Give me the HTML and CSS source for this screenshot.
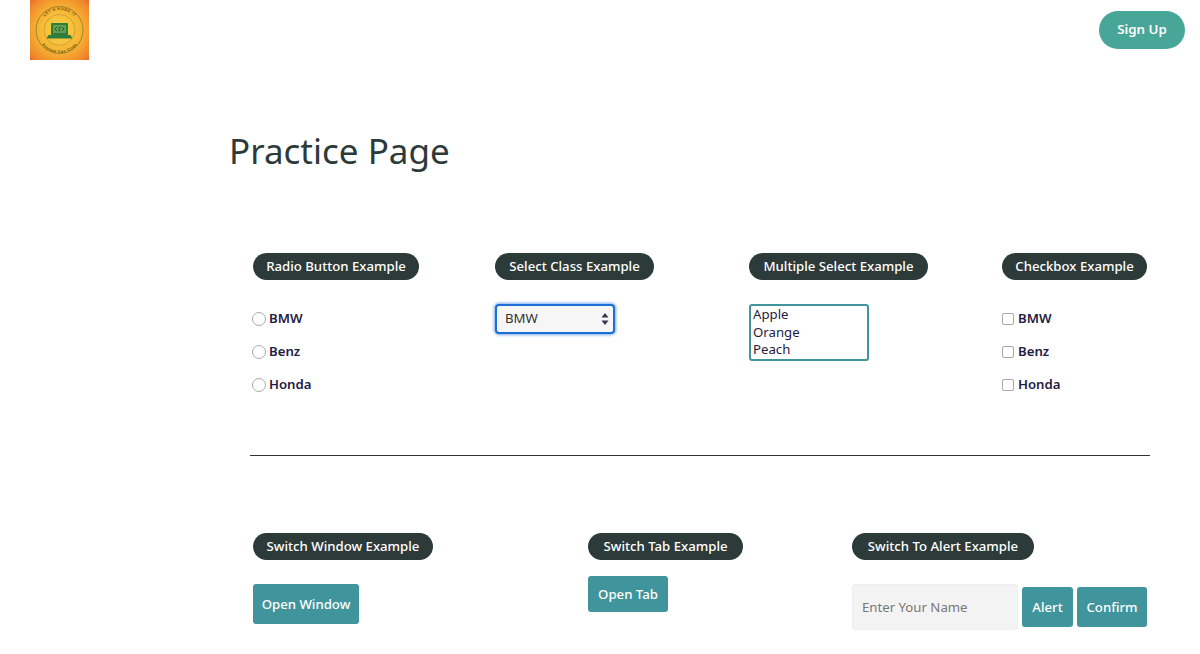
FILE: index.html
```html
<!DOCTYPE html>
<html lang="en">
<head>
<meta charset="utf-8">
<title>Practice Page</title>
<link rel="stylesheet" href="styles.css">
</head>
<body>
<header class="topbar">
  <svg class="logo" viewBox="0 0 59 60" role="img" aria-label="Let's Kode It logo">
    <defs>
      <radialGradient id="sun" cx="50%" cy="50%" r="75%">
        <stop offset="0" stop-color="#f7d648"/>
        <stop offset="0.5" stop-color="#f6b332"/>
        <stop offset="0.8" stop-color="#f08a2c"/>
        <stop offset="1" stop-color="#ea5a2a"/>
      </radialGradient>
      <path id="arcTop" d="M9.500 30a20 20 0 0 1 40 0"/>
      <path id="arcBottom" d="M6.500 30a23 23 0 0 0 46 0"/>
    </defs>
    <rect width="59" height="60" fill="url(#sun)"/>
    <circle cx="29.500" cy="30" r="23.500" fill="none" stroke="#a5812e" stroke-width="1"/>
    <circle cx="29.500" cy="30" r="15.500" fill="none" stroke="#c29a35" stroke-width="0.800"/>
    <text class="logo-text"><textPath href="#arcTop" startOffset="50%" text-anchor="middle">LET'S KODE IT</textPath></text>
    <text class="logo-text"><textPath href="#arcBottom" startOffset="50%" text-anchor="middle">Anyone Can Code</textPath></text>
    <rect x="21" y="23" width="17" height="12" rx="1" fill="#2f7d3a"/>
    <rect x="23" y="25" width="13" height="8" fill="#5f9e52"/>
    <path d="M18.500 35h22l2 3.500h-26z" fill="#2f7d3a"/>
    <path d="M27 27l-2 2 2 2M32 27l2 2-2 2M30 26.500l-1 5" fill="none" stroke="#123f1c" stroke-width="0.700"/>
  </svg>
  <a class="signup" href="#">Sign Up</a>
</header>

<main class="page">
  <h1 class="title">Practice Page</h1>

  <section class="row row-top">
    <div class="group">
      <h2 class="pill pill-radio">Radio Button Example</h2>
      <label class="choice choice-radio"><input type="radio" name="car"><span>BMW</span></label>
      <label class="choice choice-radio"><input type="radio" name="car"><span>Benz</span></label>
      <label class="choice choice-radio"><input type="radio" name="car"><span>Honda</span></label>
    </div>
    <div class="group">
      <h2 class="pill pill-select">Select Class Example</h2>
      <div class="fake-select">
        <span>BMW</span>
        <svg class="updown" viewBox="0 0 8 12"><path d="M4 0l3.500 4.500h-7zM4 12L.5 7.500h7z"/></svg>
      </div>
    </div>
    <div class="group">
      <h2 class="pill pill-multi">Multiple Select Example</h2>
      <div class="listbox">
        <div>Apple</div>
        <div>Orange</div>
        <div>Peach</div>
      </div>
    </div>
    <div class="group">
      <h2 class="pill pill-check">Checkbox Example</h2>
      <label class="choice choice-check"><input type="checkbox"><span>BMW</span></label>
      <label class="choice choice-check"><input type="checkbox"><span>Benz</span></label>
      <label class="choice choice-check"><input type="checkbox"><span>Honda</span></label>
    </div>
  </section>

  <hr class="rule">

  <section class="row row-bottom">
    <div class="group">
      <h2 class="pill pill-window">Switch Window Example</h2>
      <button class="btn btn-window" type="button">Open Window</button>
    </div>
    <div class="group">
      <h2 class="pill pill-tab">Switch Tab Example</h2>
      <button class="btn btn-tab" type="button">Open Tab</button>
    </div>
    <div class="group">
      <h2 class="pill pill-alert">Switch To Alert Example</h2>
      <div class="alert-row">
        <input class="name" type="text" placeholder="Enter Your Name">
        <button class="btn btn-alert" type="button">Alert</button>
        <button class="btn btn-confirm" type="button">Confirm</button>
      </div>
    </div>
  </section>
</main>
</body>
</html>
```

FILE: styles.css
```css
* { box-sizing: border-box; }

html, body { margin: 0; background: #fff; }

body {
  height: 654px;
  overflow: hidden;
  font-family: "Noto Sans", "Open Sans", sans-serif;
  color: #1f2041;
}

.topbar {
  display: flex;
  justify-content: space-between;
  align-items: flex-start;
  padding: 0 15px 0 30px;
  height: 60px;
}

.logo { display: block; width: 59px; height: 60px; }

.logo-text {
  font-family: "Liberation Sans", sans-serif;
  font-size: 4px;
  font-weight: 700;
  letter-spacing: 0.4px;
  fill: #6b4c14;
}

.signup {
  margin-top: 11px;
  width: 86px;
  height: 38px;
  border-radius: 19px;
  background: #47a697;
  color: #fff;
  font-size: 13.300px;
  font-weight: 600;
  line-height: 37px;
  text-align: center;
  text-decoration: none;
}

.page { margin-left: 230px; width: 920px; }

.title {
  margin: 66px 0 0 -1px;
  font-size: 35px;
  font-weight: 400;
  line-height: 50px;
  color: #2c3a3a;
}

.row { display: grid; margin-left: 23px; }

.row-top {
  grid-template-columns: 242px 254px 253px auto;
  margin-top: 77px;
  height: 202px;
}

.row-bottom {
  grid-template-columns: 335px 264px auto;
  margin-top: 77px;
}

.group {
  display: flex;
  flex-direction: column;
  align-items: flex-start;
}

.pill {
  margin: 0;
  height: 27px;
  border-radius: 14px;
  background: #2c3a3a;
  color: #fff;
  font-size: 13.200px;
  font-weight: 500;
  line-height: 27px;
  text-align: center;
  white-space: nowrap;
}

.pill-radio { width: 166px; }
.pill-select { width: 159px; }
.pill-multi { width: 179px; }
.pill-check { width: 145px; }
.pill-window { width: 180px; }
.pill-tab { width: 155px; }
.pill-alert { width: 182px; }

.pill + .choice { margin-top: 22px; }

.choice {
  display: flex;
  align-items: center;
  height: 33px;
  font-size: 13.200px;
  font-weight: 600;
}

.choice span { padding-bottom: 2px; }

.choice input { appearance: none; background: #fff; border: 1px solid #a9a9a9; }

.choice-radio input {
  margin: 0 3px 0 -1px;
  width: 14px;
  height: 14px;
  border-radius: 50%;
}

.choice-check input {
  margin: 0 4px 0 0;
  width: 12px;
  height: 12px;
  border-radius: 2px;
}

.fake-select {
  display: flex;
  justify-content: space-between;
  align-items: center;
  margin-top: 24px;
  width: 120px;
  height: 30px;
  padding: 0 4px 0 8px;
  border: 2px solid #1c6fd6;
  border-radius: 4px;
  box-shadow: 0 0 3px 1px #7aa9ea;
  background: #f6f6f6;
  font-size: 13.200px;
  color: #333;
}

.fake-select span { padding-bottom: 2px; }

.updown { width: 8px; height: 12px; fill: #333a4a; }

.listbox {
  margin-top: 24px;
  width: 120px;
  height: 57px;
  padding: 0 2px;
  border: 2px solid #3f959b;
  border-radius: 3px;
  font-size: 13.200px;
  line-height: 17.500px;
  background: #fff;
}

.btn {
  padding: 0;
  border: 0;
  border-radius: 3px;
  background: #3f959b;
  color: #fff;
  font-family: inherit;
  font-size: 13.200px;
  font-weight: 500;
}

.btn-window { width: 106px; height: 40px; margin-top: 24px; }

.btn-tab { width: 80px; height: 36px; margin-top: 16px; }

.alert-row {
  display: flex;
  align-items: center;
  gap: 4px;
  margin-top: 24px;
}

.btn-alert { width: 51px; height: 40px; }

.btn-confirm { width: 70px; height: 40px; }

.name {
  width: 166px;
  height: 46px;
  padding: 0 9px;
  border: 1px solid #eee;
  border-radius: 3px;
  background: #f3f3f3;
  font-family: inherit;
  font-size: 13.200px;
}

.name::placeholder { color: #777; opacity: 1; }

.rule {
  height: 1px;
  margin: 0 0 0 20px;
  border: 0;
  background: #333;
}
```
